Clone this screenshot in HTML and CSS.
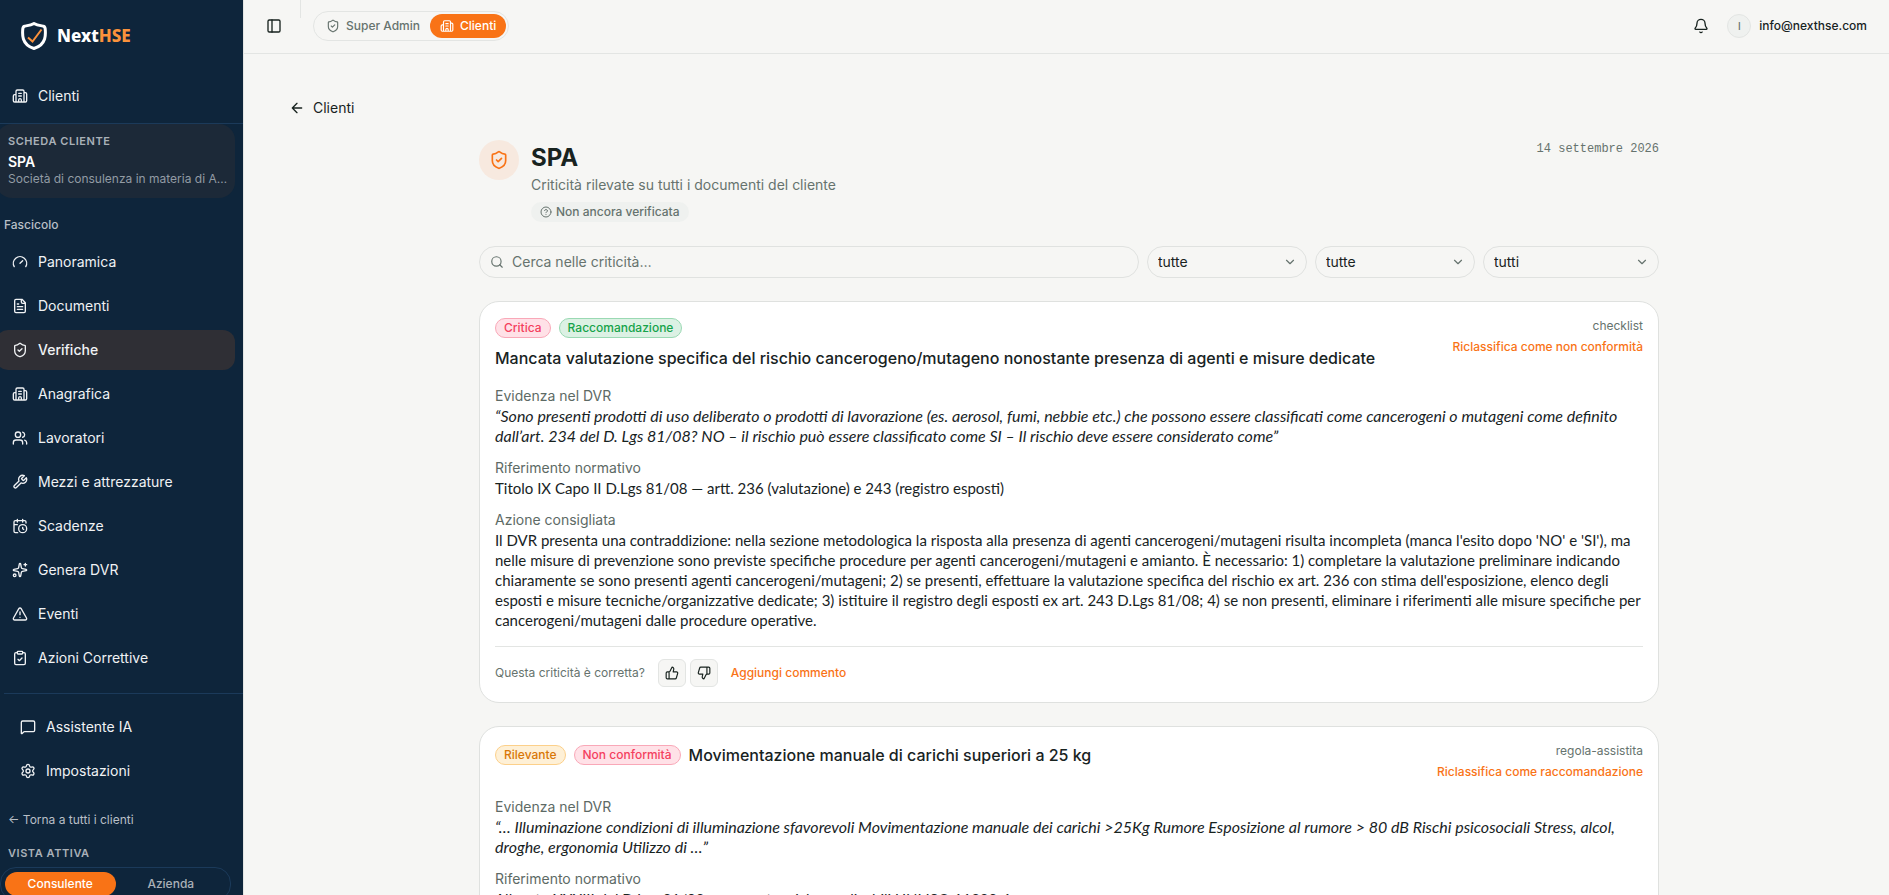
FILE: index.html
```html
<!DOCTYPE html>
<html lang="it">
<head>
    <meta charset="UTF-8">
    <meta name="viewport" content="width=device-width, initial-scale=1.0">
    <title>NextHSE - Verifiche</title>
    <link rel="stylesheet" href="styles.css">
</head>
<body>
    <svg class="sprite" aria-hidden="true">
        <symbol id="i-building" viewBox="0 0 24 24"><path d="M10 12h4M10 8h4M14 21v-3a2 2 0 0 0-4 0v3M6 10H4a2 2 0 0 0-2 2v7a2 2 0 0 0 2 2h16a2 2 0 0 0 2-2V9a2 2 0 0 0-2-2h-2M6 21V5a2 2 0 0 1 2-2h8a2 2 0 0 1 2 2v16"/></symbol>
        <symbol id="i-gauge" viewBox="0 0 24 24"><path d="m12 14 4-4M3.34 19a10 10 0 1 1 17.32 0"/></symbol>
        <symbol id="i-file" viewBox="0 0 24 24"><path d="M15 2H6a2 2 0 0 0-2 2v16a2 2 0 0 0 2 2h12a2 2 0 0 0 2-2V7ZM14 2v4a2 2 0 0 0 2 2h4M10 9H8M16 13H8M16 17H8"/></symbol>
        <symbol id="i-shield" viewBox="0 0 24 24"><path d="M20 13c0 5-3.5 7.5-7.66 8.95a1 1 0 0 1-.67-.01C7.5 20.5 4 18 4 13V6a1 1 0 0 1 1-1c2 0 4.5-1.2 6.24-2.72a1.17 1.17 0 0 1 1.52 0C14.51 3.81 17 5 19 5a1 1 0 0 1 1 1zM9 12l2 2 4-4"/></symbol>
        <symbol id="i-users" viewBox="0 0 24 24"><path d="M16 21v-2a4 4 0 0 0-4-4H6a4 4 0 0 0-4 4v2M16 3.128a4 4 0 0 1 0 7.744M22 21v-2a4 4 0 0 0-3-3.87"/><circle cx="9" cy="7" r="4"/></symbol>
        <symbol id="i-wrench" viewBox="0 0 24 24"><path d="M14.7 6.3a1 1 0 0 0 0 1.4l1.6 1.6a1 1 0 0 0 1.4 0l3.77-3.77a6 6 0 0 1-7.94 7.94l-6.91 6.91a2.12 2.12 0 0 1-3-3l6.91-6.91a6 6 0 0 1 7.94-7.94l-3.76 3.76z"/></symbol>
        <symbol id="i-calendar" viewBox="0 0 24 24"><path d="M16 14v2.2l1.6 1M16 2v4M21 7.5V6a2 2 0 0 0-2-2H5a2 2 0 0 0-2 2v14a2 2 0 0 0 2 2h3.5M3 10h5M8 2v4"/><circle cx="16" cy="16" r="6"/></symbol>
        <symbol id="i-sparkles" viewBox="0 0 24 24"><path d="M11.017 2.814a1 1 0 0 1 1.966 0l1.051 5.558a2 2 0 0 0 1.594 1.594l5.558 1.051a1 1 0 0 1 0 1.966l-5.558 1.051a2 2 0 0 0-1.594 1.594l-1.051 5.558a1 1 0 0 1-1.966 0l-1.051-5.558a2 2 0 0 0-1.594-1.594l-5.558-1.051a1 1 0 0 1 0-1.966l5.558-1.051a2 2 0 0 0 1.594-1.594zM20 2v4M22 4h-4"/><circle cx="4" cy="20" r="2"/></symbol>
        <symbol id="i-alert" viewBox="0 0 24 24"><path d="m21.73 18-8-14a2 2 0 0 0-3.48 0l-8 14A2 2 0 0 0 4 21h16a2 2 0 0 0 1.73-3M12 9v4M12 17h.01"/></symbol>
        <symbol id="i-clipboard" viewBox="0 0 24 24"><rect width="8" height="4" x="8" y="2" rx="1"/><path d="M16 4h2a2 2 0 0 1 2 2v14a2 2 0 0 1-2 2H6a2 2 0 0 1-2-2V6a2 2 0 0 1 2-2h2M9 14l2 2 4-4"/></symbol>
        <symbol id="i-message" viewBox="0 0 24 24"><path d="M22 17a2 2 0 0 1-2 2H6.828a2 2 0 0 0-1.414.586l-2.202 2.202A.71.71 0 0 1 2 21.286V5a2 2 0 0 1 2-2h16a2 2 0 0 1 2 2z"/></symbol>
        <symbol id="i-settings" viewBox="0 0 24 24"><path d="M9.671 4.136a2.34 2.34 0 0 1 4.659 0 2.34 2.34 0 0 0 3.319 1.915 2.34 2.34 0 0 1 2.33 4.033 2.34 2.34 0 0 0 0 3.831 2.34 2.34 0 0 1-2.33 4.033 2.34 2.34 0 0 0-3.319 1.915 2.34 2.34 0 0 1-4.659 0 2.34 2.34 0 0 0-3.32-1.915 2.34 2.34 0 0 1-2.33-4.033 2.34 2.34 0 0 0 0-3.831A2.34 2.34 0 0 1 6.35 6.051a2.34 2.34 0 0 0 3.319-1.915"/><circle cx="12" cy="12" r="3"/></symbol>
        <symbol id="i-panel" viewBox="0 0 24 24"><rect width="18" height="18" x="3" y="3" rx="2"/><path d="M9 3v18"/></symbol>
        <symbol id="i-bell" viewBox="0 0 24 24"><path d="M10.268 21a2 2 0 0 0 3.464 0M3.262 15.326A1 1 0 0 0 4 17h16a1 1 0 0 0 .74-1.673C19.41 13.956 18 12.499 18 8A6 6 0 0 0 6 8c0 4.499-1.411 5.956-2.738 7.326"/></symbol>
        <symbol id="i-back" viewBox="0 0 24 24"><path d="m12 19-7-7 7-7M19 12H5"/></symbol>
        <symbol id="i-help" viewBox="0 0 24 24"><circle cx="12" cy="12" r="10"/><path d="M9.09 9a3 3 0 0 1 5.83 1c0 2-3 3-3 3M12 17h.01"/></symbol>
        <symbol id="i-search" viewBox="0 0 24 24"><circle cx="11" cy="11" r="8"/><path d="m21 21-4.34-4.34"/></symbol>
        <symbol id="i-chevron" viewBox="0 0 24 24"><path d="m6 9 6 6 6-6"/></symbol>
        <symbol id="i-up" viewBox="0 0 24 24"><path d="M15 5.88 14 10h5.83a2 2 0 0 1 1.92 2.56l-2.33 8A2 2 0 0 1 17.5 22H4a2 2 0 0 1-2-2v-8a2 2 0 0 1 2-2h2.76a2 2 0 0 0 1.79-1.11L12 2a3.13 3.13 0 0 1 3 3.88ZM7 10v12"/></symbol>
        <symbol id="i-down" viewBox="0 0 24 24"><path d="M9 18.12 10 14H4.17a2 2 0 0 1-1.92-2.56l2.33-8A2 2 0 0 1 6.5 2H20a2 2 0 0 1 2 2v8a2 2 0 0 1-2 2h-2.76a2 2 0 0 0-1.79 1.11L12 22a3.13 3.13 0 0 1-3-3.88ZM17 14V2"/></symbol>
    </svg>

    <div class="app">
        <aside class="sidebar">
            <a class="logo" href="#">
                <svg class="logo-mark" viewBox="0 0 26 28">
                    <path class="logo-shield" d="M13 1.500C16 3.200 19.500 3.600 22.500 4.200C24 4.600 24.300 6 24.300 8C24.500 11 24.500 14 23.600 17C22 22 18 25 13 26.500C8 25 4 22 2.400 17C1.500 14 1.500 11 1.700 8C1.700 6 2 4.600 3.500 4.200C6.500 3.600 10 3.200 13 1.500Z"/>
                    <path class="logo-check" d="M7 15.500L11.500 19.500L20.500 7.500"/>
                </svg>
                <span>Next<span class="logo-accent">HSE</span></span>
            </a>

            <nav class="nav nav-top">
                <a class="nav-item" href="#"><svg class="icon"><use href="#i-building"/></svg>Clienti</a>
            </nav>

            <div class="client-card">
                <div class="caption">SCHEDA CLIENTE</div>
                <div class="client-name">SPA</div>
                <div class="client-desc">Società di consulenza in materia di A…</div>
            </div>

            <div class="nav-title">Fascicolo</div>
            <nav class="nav">
                <a class="nav-item" href="#"><svg class="icon"><use href="#i-gauge"/></svg>Panoramica</a>
                <a class="nav-item" href="#"><svg class="icon"><use href="#i-file"/></svg>Documenti</a>
                <a class="nav-item active" href="#"><svg class="icon"><use href="#i-shield"/></svg>Verifiche</a>
                <a class="nav-item" href="#"><svg class="icon"><use href="#i-building"/></svg>Anagrafica</a>
                <a class="nav-item" href="#"><svg class="icon"><use href="#i-users"/></svg>Lavoratori</a>
                <a class="nav-item" href="#"><svg class="icon"><use href="#i-wrench"/></svg>Mezzi e attrezzature</a>
                <a class="nav-item" href="#"><svg class="icon"><use href="#i-calendar"/></svg>Scadenze</a>
                <a class="nav-item" href="#"><svg class="icon"><use href="#i-sparkles"/></svg>Genera DVR</a>
                <a class="nav-item" href="#"><svg class="icon"><use href="#i-alert"/></svg>Eventi</a>
                <a class="nav-item" href="#"><svg class="icon"><use href="#i-clipboard"/></svg>Azioni Correttive</a>
            </nav>

            <nav class="nav nav-bottom">
                <a class="nav-item" href="#"><svg class="icon"><use href="#i-message"/></svg>Assistente IA</a>
                <a class="nav-item" href="#"><svg class="icon"><use href="#i-settings"/></svg>Impostazioni</a>
            </nav>

            <a class="back-all" href="#">← Torna a tutti i clienti</a>
            <div class="caption view-title">VISTA ATTIVA</div>
            <div class="view-switch">
                <button type="button" class="view-btn selected">Consulente</button>
                <button type="button" class="view-btn">Azienda</button>
            </div>
        </aside>

        <div class="page">
            <header class="topbar">
                <button type="button" class="icon-btn" aria-label="Apri o chiudi menu"><svg class="icon"><use href="#i-panel"/></svg></button>
                <span class="topbar-line"></span>
                <div class="role-switch">
                    <button type="button" class="role-btn"><svg class="icon icon-sm"><use href="#i-shield"/></svg>Super Admin</button>
                    <button type="button" class="role-btn selected"><svg class="icon icon-sm"><use href="#i-building"/></svg>Clienti</button>
                </div>
                <div class="user">
                    <button type="button" class="icon-btn" aria-label="Notifiche"><svg class="icon"><use href="#i-bell"/></svg></button>
                    <span class="avatar">I</span>
                    <span>info@nexthse.com</span>
                </div>
            </header>

            <main class="main">
                <a class="back" href="#"><svg class="icon"><use href="#i-back"/></svg>Clienti</a>

                <div class="content">
                    <div class="heading">
                        <span class="heading-icon"><svg class="icon"><use href="#i-shield"/></svg></span>
                        <div class="heading-text">
                            <h1>SPA</h1>
                            <p>Criticità rilevate su tutti i documenti del cliente</p>
                            <span class="status"><svg class="icon"><use href="#i-help"/></svg>Non ancora verificata</span>
                        </div>
                        <time class="date" datetime="2026-09-14">14 settembre 2026</time>
                    </div>

                    <form class="filters">
                        <div class="field search">
                            <svg class="icon icon-sm"><use href="#i-search"/></svg>
                            <input type="search" aria-label="Cerca nelle criticità" placeholder="Cerca nelle criticità…">
                        </div>
                        <div class="field select">
                            <select aria-label="Gravità"><option>tutte</option></select>
                            <svg class="icon icon-sm"><use href="#i-chevron"/></svg>
                        </div>
                        <div class="field select">
                            <select aria-label="Tipologia"><option>tutte</option></select>
                            <svg class="icon icon-sm"><use href="#i-chevron"/></svg>
                        </div>
                        <div class="field select select-wide">
                            <select aria-label="Documenti"><option>tutti</option></select>
                            <svg class="icon icon-sm"><use href="#i-chevron"/></svg>
                        </div>
                    </form>

                    <article class="card">
                        <div class="card-head">
                            <div class="card-title">
                                <span class="tag tag-red">Critica</span>
                                <span class="tag tag-green">Raccomandazione</span>
                                <h2>Mancata valutazione specifica del rischio cancerogeno/mutageno nonostante presenza di agenti e misure dedicate</h2>
                            </div>
                            <div class="card-side">
                                <span>checklist</span>
                                <button type="button" class="link-btn">Riclassifica come non conformità</button>
                            </div>
                        </div>
                        <dl class="details">
                            <div>
                                <dt>Evidenza nel DVR</dt>
                                <dd class="quote">“Sono presenti prodotti di uso deliberato o prodotti di lavorazione (es. aerosol, fumi, nebbie etc.) che possono essere classificati come cancerogeni o mutageni come definito dall’art. 234 del D. Lgs 81/08? NO – il rischio può essere classificato come SI – Il rischio deve essere considerato come”</dd>
                            </div>
                            <div>
                                <dt>Riferimento normativo</dt>
                                <dd>Titolo IX Capo II D.Lgs 81/08 — artt. 236 (valutazione) e 243 (registro esposti)</dd>
                            </div>
                            <div>
                                <dt>Azione consigliata</dt>
                                <dd>Il DVR presenta una contraddizione: nella sezione metodologica la risposta alla presenza di agenti cancerogeni/mutageni risulta incompleta (manca l'esito dopo 'NO' e 'SI'), ma nelle misure di prevenzione sono previste specifiche procedure per agenti cancerogeni/mutageni e amianto. È necessario: 1) completare la valutazione preliminare indicando chiaramente se sono presenti agenti cancerogeni/mutageni; 2) se presenti, effettuare la valutazione specifica del rischio ex art. 236 con stima dell'esposizione, elenco degli esposti e misure tecniche/organizzative dedicate; 3) istituire il registro degli esposti ex art. 243 D.Lgs 81/08; 4) se non presenti, eliminare i riferimenti alle misure specifiche per cancerogeni/mutageni dalle procedure operative.</dd>
                            </div>
                        </dl>
                        <div class="feedback">
                            <span>Questa criticità è corretta?</span>
                            <div class="votes">
                                <button type="button" class="vote" aria-label="Corretta"><svg class="icon icon-sm"><use href="#i-up"/></svg></button>
                                <button type="button" class="vote" aria-label="Non corretta"><svg class="icon icon-sm"><use href="#i-down"/></svg></button>
                            </div>
                            <button type="button" class="link-btn">Aggiungi commento</button>
                        </div>
                    </article>

                    <article class="card">
                        <div class="card-head">
                            <div class="card-title">
                                <span class="tag tag-amber">Rilevante</span>
                                <span class="tag tag-red">Non conformità</span>
                                <h2>Movimentazione manuale di carichi superiori a 25 kg</h2>
                            </div>
                            <div class="card-side">
                                <span>regola-assistita</span>
                                <button type="button" class="link-btn">Riclassifica come raccomandazione</button>
                            </div>
                        </div>
                        <dl class="details">
                            <div>
                                <dt>Evidenza nel DVR</dt>
                                <dd class="quote">“… Illuminazione condizioni di illuminazione sfavorevoli Movimentazione manuale dei carichi &gt;25Kg Rumore Esposizione al rumore &gt; 80 dB Rischi psicosociali Stress, alcol, droghe, ergonomia Utilizzo di …”</dd>
                            </div>
                            <div>
                                <dt>Riferimento normativo</dt>
                                <dd>Allegato XXXIII del D.Lgs 81/08 e norme tecniche applicabili UNI ISO 11228-1</dd>
                            </div>
                        </dl>
                    </article>
                </div>
            </main>
        </div>
    </div>
</body>
</html>
```
FILE: styles.css
```css
* {
    box-sizing: border-box;
}
body {
    margin: 0;
    font-family: Inter, "Noto Sans", sans-serif;
    font-size: 14px;
    line-height: 20px;
    color: #18231f;
    background-color: #f6f6f4;
}
a {
    color: inherit;
    text-decoration: none;
}
button,
input,
select {
    font: inherit;
    color: inherit;
}
button {
    border: none;
    padding: 0;
    background: none;
    cursor: pointer;
}
h1,
h2,
p,
dl,
dd {
    margin: 0;
}
.sprite {
    display: none;
}
.icon {
    width: 16px;
    height: 16px;
    flex-shrink: 0;
    fill: none;
    stroke: currentColor;
    stroke-width: 2;
    stroke-linecap: round;
    stroke-linejoin: round;
}
.icon-sm {
    width: 14px;
    height: 14px;
}
.app {
    display: flex;
    height: 100vh;
    overflow: hidden;
}

/* sidebar */
.sidebar {
    width: 243px;
    flex-shrink: 0;
    overflow: hidden;
    background-color: #0e253b;
    color: #f0f2f4;
}
.logo {
    display: flex;
    align-items: center;
    gap: 10px;
    padding: 22px 21px 20px;
    font-family: "Noto Sans", sans-serif;
    font-size: 17px;
    font-weight: 800;
    line-height: 28px;
    color: #fff;
}
.logo-mark {
    width: 26px;
    height: 28px;
    fill: none;
}
.logo-shield {
    stroke: #fff;
    stroke-width: 3;
    stroke-linejoin: round;
}
.logo-check {
    stroke: #fb923c;
    stroke-width: 2;
}
.logo-accent {
    color: #fb923c;
}
.nav {
    display: flex;
    flex-direction: column;
    gap: 4px;
    padding-right: 8px;
    margin-left: -4px;
}
.nav-top {
    padding-top: 6px;
    padding-bottom: 7px;
    border-bottom: 1px solid #1b3a5a;
}
.nav-item {
    display: flex;
    align-items: center;
    gap: 10px;
    height: 40px;
    padding: 0 16px;
    border-radius: 12px;
}
.nav-item.active {
    background-color: #2f2f35;
    font-weight: 500;
}
.client-card {
    margin: 0 8px 0 -4px;
    padding: 9px 4px 11px 12px;
    border-radius: 16px;
    background-color: #1c2938;
}
.caption {
    font-size: 11px;
    font-weight: 600;
    line-height: 16px;
    letter-spacing: 0.05em;
    color: #aab1b8;
}
.client-name {
    margin-top: 4px;
    font-weight: 600;
    line-height: 18px;
    color: #fff;
}
.client-desc {
    overflow: hidden;
    font-size: 12px;
    line-height: 16px;
    text-overflow: ellipsis;
    white-space: nowrap;
    color: #929ba4;
}
.nav-title {
    padding: 19px 4px 9px;
    font-size: 12px;
    font-weight: 500;
    line-height: 16px;
    color: #b8bfc6;
}
.nav-bottom {
    margin-left: 4px;
    margin-top: 15px;
    padding-top: 13px;
    border-top: 1px solid #1b3a5a;
}
.back-all {
    display: block;
    padding: 20px 8px 16px;
    font-size: 12px;
    line-height: 18px;
    color: #b8bfc6;
}
.view-title {
    padding-left: 8px;
}
.view-switch {
    display: flex;
    margin: 6px 12px 0 0;
    padding: 4px;
    border: 1px solid #1b3a5a;
    border-radius: 16px;
}
.view-btn {
    flex: 1;
    height: 24px;
    border-radius: 12px;
    font-size: 12px;
    font-weight: 500;
    color: #aab1b8;
}
.view-btn.selected {
    background-color: #f97316;
    color: #fff;
}

/* top bar */
.page {
    flex: 1;
    min-width: 0;
    border-left: 1px solid #e3e5e3;
}
.topbar {
    display: flex;
    align-items: center;
    height: 54px;
    padding: 0 22px 2px 16px;
    border-bottom: 1px solid #e3e5e3;
}
.icon-btn {
    display: grid;
    place-items: center;
    width: 28px;
    height: 28px;
}
.topbar-line {
    align-self: flex-start;
    width: 1px;
    height: 18px;
    margin: 0 12px;
    background-color: #e3e5e3;
}
.role-switch {
    display: flex;
    padding: 2px;
    border: 1px solid #e3e5e3;
    border-radius: 15px;
}
.role-btn {
    display: flex;
    align-items: center;
    gap: 6px;
    height: 24px;
    padding: 0 10px;
    border-radius: 12px;
    font-size: 12px;
    font-weight: 500;
    color: #66736e;
}
.role-btn.selected {
    background-color: #f97316;
    color: #fff;
}
.user {
    display: flex;
    align-items: center;
    gap: 8px;
    margin-left: auto;
    font-size: 12px;
    font-weight: 500;
}
.avatar {
    width: 24px;
    height: 24px;
    margin-left: 4px;
    border: 1px solid #e3e5e3;
    border-radius: 50%;
    background-color: #eff1ef;
    font-size: 10px;
    line-height: 22px;
    text-align: center;
    color: #66736e;
}

/* page content */
.main {
    padding: 44px 40px 0 45px;
}
.back {
    display: inline-flex;
    align-items: center;
    gap: 8px;
}
.content {
    max-width: 1180px;
    margin: 19px auto 0;
}
.heading {
    display: flex;
    align-items: flex-start;
    gap: 12px;
}
.heading-icon {
    display: grid;
    place-items: center;
    width: 40px;
    height: 40px;
    border-radius: 50%;
    background-color: #f7e9df;
    color: #f97316;
}
.heading-icon .icon {
    width: 20px;
    height: 20px;
}
.heading-text {
    flex: 1;
    padding-top: 1px;
}
.heading h1 {
    font-size: 24px;
    font-weight: 700;
    line-height: 34px;
}
.heading p {
    color: #66736e;
}
.status {
    display: inline-flex;
    align-items: center;
    gap: 4px;
    height: 20px;
    margin-top: 7px;
    padding: 0 9px;
    border-radius: 10px;
    background-color: #eff1ef;
    font-size: 12px;
    font-weight: 500;
    line-height: 16px;
    color: #66736e;
}
.status .icon {
    width: 12px;
    height: 12px;
}
.date {
    padding-top: 1px;
    font-family: "Liberation Mono", monospace;
    font-size: 12px;
    line-height: 16px;
    color: #66736e;
}
.filters {
    display: flex;
    gap: 8px;
    margin: 23px 0;
}
.field {
    display: flex;
    align-items: center;
    height: 32px;
    border: 1px solid #e0e2e0;
    border-radius: 16px;
}
.search {
    flex: 1;
    gap: 8px;
    padding: 0 10px;
}
.search .icon {
    color: #66736e;
}
.search input {
    flex: 1;
    min-width: 0;
    padding: 0;
    border: none;
    outline: none;
    background: none;
}
.search input::placeholder {
    color: #66736e;
    opacity: 1;
}
.select {
    display: grid;
    width: 160px;
}
.select-wide {
    width: 176px;
}
.select select,
.select .icon {
    grid-area: 1 / 1;
}
.select select {
    height: 30px;
    padding: 0 32px 0 10px;
    border: none;
    border-radius: 16px;
    outline: none;
    background: none;
    appearance: none;
}
.select .icon {
    justify-self: end;
    margin-right: 9px;
    color: #66736e;
    pointer-events: none;
}

/* cards */
.card {
    margin-bottom: 23px;
    padding: 16px 15px 15px;
    border: 1px solid #dfe1df;
    border-radius: 20px;
    background-color: #fff;
}
.card-head {
    display: flex;
    align-items: flex-start;
    justify-content: space-between;
    gap: 12px;
    margin-bottom: 16px;
}
.card-title {
    display: flex;
    flex-wrap: wrap;
    align-items: center;
    gap: 8px;
}
.card-title h2 {
    font-size: 16px;
    font-weight: 500;
    line-height: 24px;
}
.tag {
    height: 20px;
    padding: 0 8px;
    border: 1px solid;
    border-radius: 10px;
    font-size: 12px;
    font-weight: 500;
    line-height: 18px;
}
.tag-red {
    border-color: #f9a8b8;
    background-color: #ffe1e7;
    color: #f43f5e;
}
.tag-green {
    border-color: #9ad9b3;
    background-color: #dcf1e4;
    color: #16a34a;
}
.tag-amber {
    border-color: #fcd08a;
    background-color: #fef0d6;
    color: #d97706;
}
.card-side {
    display: flex;
    flex-direction: column;
    align-items: flex-end;
    gap: 4px;
    flex-shrink: 0;
    font-size: 12px;
    line-height: 16px;
    color: #66736e;
}
.link-btn {
    font-size: 12px;
    font-weight: 500;
    line-height: 18px;
    color: #f97316;
}
.details {
    display: flex;
    flex-direction: column;
    gap: 12px;
}
.details dt {
    color: #5d6a65;
}
.details dd {
    font-family: Lato, Inter, sans-serif;
    font-size: 15px;
}
.details .quote {
    font-size: 16px;
    font-style: italic;
}
.feedback {
    display: flex;
    align-items: center;
    gap: 13px;
    margin-top: 16px;
    padding-top: 12px;
    border-top: 1px solid #e3e5e3;
    font-size: 12px;
    color: #66736e;
}
.votes {
    display: flex;
    gap: 4px;
}
.vote {
    display: grid;
    place-items: center;
    width: 28px;
    height: 28px;
    border: 1px solid #e3e5e3;
    border-radius: 6px;
    background-color: #f6f6f4;
    color: #18231f;
}
```
